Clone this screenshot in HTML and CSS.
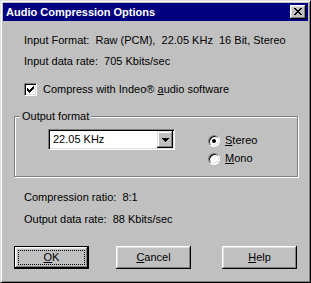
FILE: index.html
```html
<!DOCTYPE html>
<html lang="en">
<head>
  <meta charset="UTF-8">
  <title>Audio Compression Options</title>
  <link rel="stylesheet" href="styles.css">
</head>
<body>

  <div class="window">
    <div class="title-bar">
      <span class="title">Audio Compression Options</span>
      <button class="close-btn">
        <svg width="8" height="7" viewBox="0 0 8 7" shape-rendering="crispEdges">
          <path d="M0 0h2v1h-2z M6 0h2v1h-2z M1 1h2v1h-2z M5 1h2v1h-2z M2 2h4v1h-4z M3 3h2v1h-2z M2 4h4v1h-4z M1 5h2v1h-2z M5 5h2v1h-2z M0 6h2v1h-2z M6 6h2v1h-2z" fill="#000"/>
        </svg>
      </button>
    </div>

    <div class="content">
      <div class="line line-first">Input Format:  Raw (PCM),  22.05 KHz  16 Bit, Stereo</div>
      <div class="line line-second">Input data rate:  705 Kbits/sec</div>

      <div class="check-row">
        <span class="checkbox">
          <svg width="7" height="7" viewBox="0 0 7 7" shape-rendering="crispEdges">
            <path d="M6 0h1v1h-1z M5 1h2v1h-2z M0 2h1v1h-1z M4 2h3v1h-3z M0 3h2v1h-2z M3 3h3v1h-3z M0 4h5v1h-5z M1 5h3v1h-3z M2 6h1v1h-1z" fill="#000"/>
          </svg>
        </span>
        <span>Compress with Indeo® <u>a</u>udio software</span>
      </div>

      <div class="group">
        <span class="group-label">Output format</span>
        <div class="combo">
          <span class="combo-text">22.05 KHz</span>
          <span class="combo-btn">
            <svg width="7" height="4" viewBox="0 0 7 4" shape-rendering="crispEdges">
              <path d="M0 0h7v1h-7z M1 1h5v1h-5z M2 2h3v1h-3z M3 3h1v1h-1z" fill="#000"/>
            </svg>
          </span>
        </div>
        <div class="radios">
          <div class="radio-row"><span class="radio checked"></span><span><u>S</u>tereo</span></div>
          <div class="radio-row"><span class="radio"></span><span><u>M</u>ono</span></div>
        </div>
      </div>

      <div class="line line-ratio">Compression ratio:  8:1</div>
      <div class="line line-output">Output data rate:  88 Kbits/sec</div>

      <div class="buttons">
        <button class="btn btn-default"><span class="focus"><u>O</u>K</span></button>
        <button class="btn btn-cancel"><u>C</u>ancel</button>
        <button class="btn btn-help"><u>H</u>elp</button>
      </div>
    </div>
  </div>

</body>
</html>
```

FILE: styles.css
```css
* {
  box-sizing: border-box;
  margin: 0;
  padding: 0;
}

body {
  width: 311px;
  height: 283px;
  overflow: hidden;
  background: #c0c0c0;
  font-family: 'Liberation Sans', Arial, sans-serif;
  font-size: 11px;
  line-height: 13px;
  color: #000;
}

.window {
  width: 311px;
  height: 283px;
  background: #c0c0c0;
  border: 1px solid;
  border-color: #dfdfdf #000 #000 #dfdfdf;
  box-shadow: inset 1px 1px #fff, inset -1px -1px #808080;
  padding: 2px;
}

.title-bar {
  height: 18px;
  background: #000080;
  color: #fff;
  display: flex;
  align-items: center;
  justify-content: space-between;
  padding: 0 2px 0 3px;
}

.title {
  font-weight: bold;
  line-height: 18px;
}

.close-btn {
  width: 16px;
  height: 14px;
  border: none;
  background: #c0c0c0;
  box-shadow: inset -1px -1px #000, inset 1px 1px #fff, inset -2px -2px #808080, inset 2px 2px #dfdfdf;
  display: flex;
  align-items: center;
  justify-content: center;
  padding: 0 1px 1px 0;
}

.content {
  padding: 0 10px 0 11px;
}

.line {
  white-space: pre;
  margin-left: 10px;
}

.line-first {
  margin-top: 13px;
}

.line-second {
  margin-top: 8px;
}

.check-row {
  display: flex;
  align-items: center;
  gap: 6px;
  margin: 15px 0 0 10px;
  height: 13px;
}

.checkbox {
  width: 13px;
  height: 13px;
  background: #fff;
  border: 1px solid;
  border-color: #808080 #fff #fff #808080;
  box-shadow: inset 1px 1px #000, inset -1px -1px #dfdfdf;
  display: flex;
  align-items: center;
  justify-content: center;
}

.group {
  position: relative;
  margin-top: 20px;
  height: 61px;
  border: 1px solid #808080;
  box-shadow: inset 1px 1px #fff, 1px 1px #fff;
  display: flex;
  align-items: flex-start;
  padding: 12px 0 0 33px;
}

.group-label {
  position: absolute;
  top: -7px;
  left: 5px;
  padding: 0 2px;
  background: #c0c0c0;
}

.combo {
  width: 127px;
  height: 21px;
  background: #fff;
  border: 1px solid;
  border-color: #808080 #fff #fff #808080;
  box-shadow: inset 1px 1px #000, inset -1px -1px #dfdfdf;
  display: flex;
  align-items: center;
  justify-content: space-between;
  padding: 1px;
}

.combo-text {
  padding-left: 3px;
}

.combo-btn {
  width: 16px;
  height: 17px;
  background: #c0c0c0;
  box-shadow: inset -1px -1px #000, inset 1px 1px #dfdfdf, inset -2px -2px #808080, inset 2px 2px #fff;
  display: flex;
  align-items: center;
  justify-content: center;
  padding: 1px 0 0 0;
}

.radios {
  margin-left: 33px;
  margin-top: 5px;
  display: flex;
  flex-direction: column;
  gap: 5px;
}

.radio-row {
  display: flex;
  align-items: center;
  gap: 5px;
  height: 13px;
}

.radio {
  position: relative;
  width: 12px;
  height: 12px;
  border-radius: 50%;
  background: #fff;
  border: 1px solid;
  border-color: #808080 #fff #fff #808080;
  box-shadow: inset 1px 1px #000, inset -1px -1px #dfdfdf;
}

.radio.checked::after {
  content: "";
  position: absolute;
  left: 3px;
  top: 3px;
  width: 4px;
  height: 4px;
  border-radius: 50%;
  background: #000;
}

.line-ratio {
  margin-top: 14px;
}

.line-output {
  margin-top: 9px;
}

.buttons {
  display: flex;
  margin-top: 20px;
}

.btn {
  width: 75px;
  height: 23px;
  border: none;
  background: #c0c0c0;
  font-family: inherit;
  font-size: 11px;
  line-height: 13px;
  color: #000;
  box-shadow: inset -1px -1px #000, inset 1px 1px #fff, inset -2px -2px #808080, inset 2px 2px #dfdfdf;
  display: flex;
  align-items: center;
  justify-content: center;
}

.btn-default {
  border: 1px solid #000;
  padding: 3px;
  align-items: stretch;
}

.focus {
  flex: 1;
  border: 1px dotted #000;
  display: flex;
  align-items: center;
  justify-content: center;
}

.btn-cancel {
  margin-left: 27px;
}

.btn-help {
  margin-left: 31px;
}
```
